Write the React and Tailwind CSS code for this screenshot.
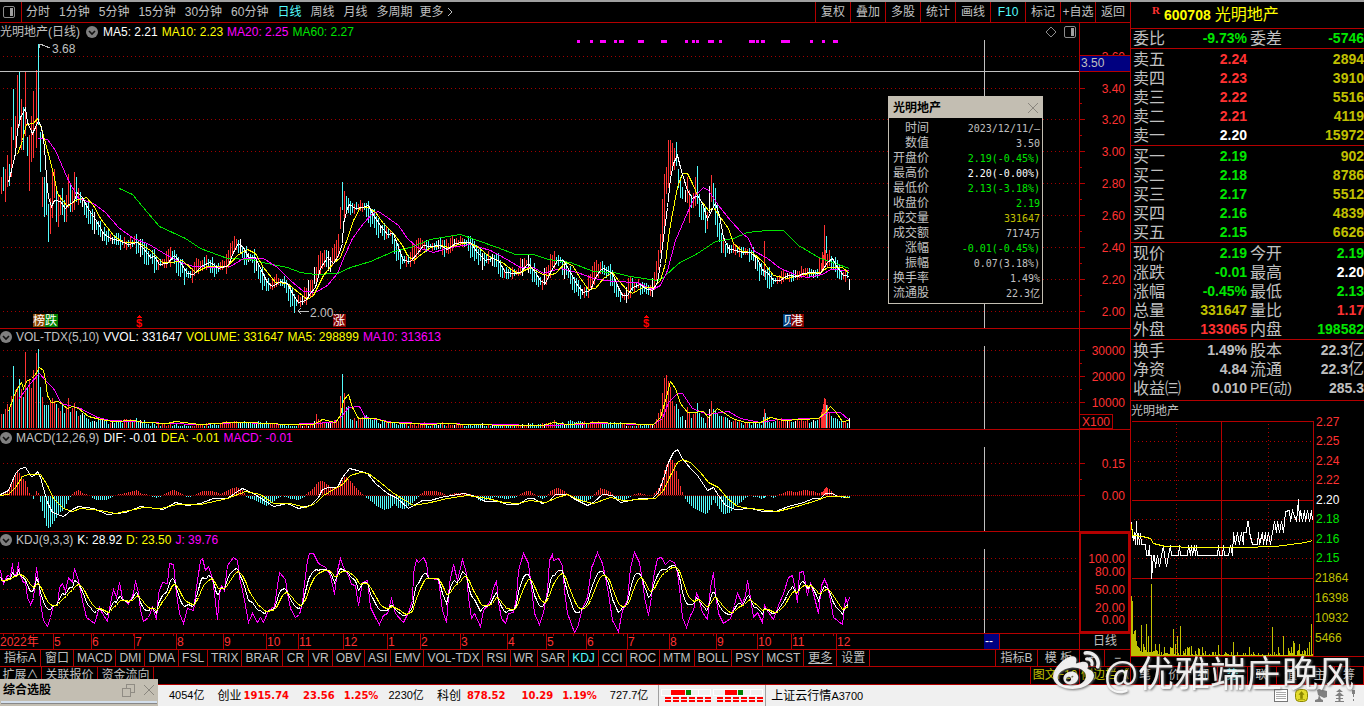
import React from 'react';
import { FaWeibo } from 'react-icons/fa';

const RED = '#ff3232';
const CYAN = '#54fcfc';
const LINE = '#b40000';
const GRAY = '#c0c0c0';
const YELLOW = '#ffff00';
const PINK = '#ff00ff';
const GREEN = '#00e600';
const OLIVE = '#c0c000';

const MA5 = '8,182 11,170 15,153 17,130 20,117 25,108 27,122 32,133 35,127 38,120 41,127 44,147 46,177 48,197 51,206 54,200 60,201 65,208 68,204 73,202 77,192 82,197 87,207 97,222 103,233 110,238 118,240 128,244 137,242 143,248 150,257 154,256 159,264 167,263 174,255 180,262 187,273 193,274 202,265 210,262 218,268 228,265 233,252 238,243 243,247 248,257 255,257 262,272 267,282 272,286 280,281 287,283 293,295 298,302 305,300 310,293 315,287 320,268 327,257 333,263 338,255 342,243 343,223 347,208 349,204 355,208 362,207 368,205 373,215 380,225 387,234 393,233 398,247 403,260 410,261 417,253 423,245 430,246 440,245 447,249 455,243 463,242 470,242 477,252 485,260 492,258 498,260 505,272 513,273 520,272 528,263 535,272 540,280 545,283 550,272 557,260 563,260 570,272 577,285 583,292 590,290 595,277 600,270 603,268 612,273 617,285 622,295 627,295 632,287 640,284 645,288 652,290 657,282 660,263 663,237 667,207 670,178 673,163 677,155 680,167 683,177 687,190 692,198 697,195 702,203 707,219 712,208 715,203 719,215 723,237 728,248 735,250 743,252 750,252 757,258 762,270 767,272 773,280 780,280 787,275 797,276 803,273 810,272 820,273 827,262 832,258 837,267 843,275 849,276';
const MA10 = '17,154 22,140 26,124 33,123 37,118 41,128 47,150 53,173 57,193 62,200 67,206 75,200 86,197 93,205 100,218 113,235 123,242 138,242 150,250 162,262 172,262 182,260 195,272 207,266 227,266 237,255 247,249 255,253 263,267 275,282 287,283 298,292 307,299 313,295 323,275 333,263 340,257 347,238 353,220 360,207 368,207 375,212 383,223 393,233 402,245 407,255 413,260 422,253 430,247 440,245 448,247 458,244 468,242 478,247 490,257 502,262 512,270 518,273 530,267 540,273 547,275 555,273 565,262 572,265 580,278 588,289 595,288 603,278 612,272 618,280 627,290 632,293 642,287 653,287 660,280 665,263 668,237 672,213 677,187 682,173 687,173 692,183 698,197 708,210 713,207 720,217 728,228 733,243 742,251 752,252 763,262 773,275 787,278 797,275 810,273 820,272 827,267 842,267 849,273';
const MA20 = '38,138 47,139 55,150 67,178 78,198 93,203 105,212 118,227 133,238 147,243 167,255 180,262 193,266 213,267 230,266 243,258 263,258 277,267 290,280 303,291 315,292 327,285 337,273 343,258 352,238 363,223 372,213 378,211 387,217 398,225 407,238 417,247 433,252 450,247 470,244 490,250 503,257 520,267 533,267 543,273 560,268 577,272 593,278 613,281 637,282 652,289 660,285 667,270 675,240 687,212 695,195 703,187 708,190 718,205 730,220 742,233 748,238 753,250 767,258 780,268 797,275 807,277 822,274 830,269 849,270';
const MA60 = '119,188 132,194 147,212 159,226 185,238 200,248 227,258 250,259 267,263 287,267 300,272 315,274 337,273 350,267 370,261 393,251 410,247 430,239 460,234 477,240 497,247 515,254 533,254 548,259 570,262 593,271 613,272 630,276 657,280 663,277 678,263 697,253 715,241 733,238 747,232 767,230 783,230 798,245 820,258 835,263 849,268';
const VOL5 = '8,411 13,397 17,388 21,382 23,388 26,381 31,378 35,374 39,367 43,370 45,380 47,395 51,402 58,401 67,408 72,406 78,408 88,416 100,419 113,421 133,420 143,422 167,423 175,421 200,424 230,422 247,422 287,424 313,424 322,419 335,422 340,415 343,400 348,394 352,407 358,418 375,418 388,422 430,424 443,423 470,424 513,425 543,425 553,422 567,424 597,422 617,423 653,424 660,417 665,400 670,381 675,388 680,403 687,412 693,412 703,411 708,417 717,408 723,412 732,418 745,422 760,422 770,417 783,420 818,418 825,412 830,406 835,411 842,421 849,420';
const VOL10 = '18,399 30,383 39,373 45,380 53,388 61,403 80,408 97,417 110,420 133,421 167,423 200,424 240,422 287,424 333,422 342,415 348,407 359,406 365,417 383,420 393,422 430,423 547,425 597,423 653,424 662,418 668,402 677,393 682,393 692,408 707,414 728,411 740,418 760,422 777,419 818,418 828,412 840,412 849,420';
const DIF = '0,494 8,490 15,473 20,468 25,467 31,476 34,475 37,471 40,477 43,488 47,502 52,512 63,516 72,509 78,506 93,508 107,514 125,512 140,506 163,509 175,502 187,505 200,503 213,498 227,498 237,491 242,488 253,493 267,502 273,506 287,503 298,508 310,505 318,497 322,489 328,487 337,487 342,477 349,468 357,470 367,473 375,483 387,493 397,498 408,508 422,500 430,500 440,497 463,493 472,495 485,501 498,501 507,504 518,504 527,498 533,498 542,503 548,501 555,494 567,494 573,498 587,505 593,502 602,494 612,495 620,502 630,500 640,498 652,498 658,492 663,478 668,462 673,452 677,449 682,458 690,468 697,475 707,490 713,487 718,495 725,505 735,509 750,508 763,511 775,511 788,506 803,502 813,498 820,498 825,493 832,493 837,496 849,497';
const DEA = '0,495 8,494 15,487 22,476 28,474 40,474 47,485 53,498 63,508 72,511 80,508 100,510 115,513 143,507 160,508 177,504 200,504 227,498 245,491 260,494 273,503 290,503 305,507 315,503 323,495 333,489 342,484 350,475 360,472 368,473 380,482 392,492 403,499 413,505 430,502 447,498 467,495 487,498 503,502 517,503 530,500 545,502 557,497 567,494 580,500 593,503 610,497 623,500 640,499 655,498 663,490 670,475 677,462 682,459 690,462 700,472 708,482 718,487 727,498 737,506 750,508 777,511 793,507 813,501 827,496 840,496 849,497';
const KDJ_J = '0,570 2,580 3,583 7,575 10,576 12,563 13,573 16,575 18,562 19,573 23,582 25,582 27,597 30,604 33,598 36,567 39,587 40,603 43,620 47,626 50,617 53,605 57,605 59,587 62,583 65,591 68,577 72,582 74,568 78,580 82,600 86,617 94,623 99,607 102,613 107,621 110,603 113,589 116,597 119,582 122,598 128,604 133,593 135,580 138,593 140,610 143,621 148,617 152,607 156,619 158,593 162,582 167,583 169,563 173,564 176,593 179,613 183,623 187,608 193,610 196,587 200,560 202,558 205,570 208,566 212,578 214,593 217,619 219,593 221,585 224,590 227,565 233,557 237,560 239,577 242,590 244,600 248,622 252,613 257,622 260,617 263,622 268,610 274,606 277,585 279,572 285,579 287,593 290,608 295,617 299,614 302,602 304,583 307,560 309,553 313,553 318,563 325,567 330,575 334,594 337,570 340,558 343,567 348,575 351,584 355,585 358,605 362,582 367,580 370,607 375,617 379,624 383,615 387,613 391,598 395,613 403,622 408,612 412,600 413,573 416,559 418,562 423,557 426,563 428,578 438,579 442,610 446,622 449,583 453,564 457,580 462,559 466,573 468,597 471,618 474,613 480,626 483,610 487,605 490,600 493,588 496,580 498,602 501,618 505,623 508,613 513,612 516,597 518,570 523,553 528,563 531,587 534,613 539,624 543,612 547,590 549,560 552,554 553,560 558,558 562,565 564,590 567,613 574,632 577,627 582,608 587,597 591,567 593,563 597,552 602,563 605,577 608,593 612,620 618,631 622,610 627,600 630,567 634,552 639,562 642,580 644,597 648,615 651,597 653,577 657,558 661,557 665,564 669,560 674,562 677,572 680,597 682,617 686,627 690,615 693,610 696,593 698,597 702,612 707,619 710,587 713,572 715,593 718,613 723,623 730,618 734,605 737,593 742,603 745,595 747,580 750,597 753,617 757,612 762,622 764,605 768,612 773,619 778,605 783,593 788,577 792,575 794,585 797,602 799,572 803,571 807,595 810,582 813,593 818,613 821,585 824,579 827,585 830,600 833,617 842,624 845,598 847,602 849,597';

// x, high, low, colour
const KEY_BARS = '1,177,194,r 3,167,191,c 5,169,202,r 7,155,187,r 9,164,186,c 11,127,177,r 13,89,140,c 15,116,150,r 17,75,134,r 19,72,126,c 21,99,150,r 23,107,150,c 25,72,136,r 27,137,156,c 29,135,191,r 31,116,162,r 33,91,158,r 36,70,148,r 38,44,125,c 40,132,172,c 42,177,207,r 44,177,217,c 46,170,215,c 48,204,242,c 50,198,234,r 52,170,218,r 54,169,198,r 56,190,222,c 58,195,227,r 60,195,215,r 62,188,215,c 64,200,222,c 66,195,222,r 68,174,208,r 70,184,212,c 72,190,212,r 74,172,210,r 76,177,202,c 78,188,205,r 340,207,229,r 342,182,210,c 344,191,218,r 346,196,210,c 658,250,270,r 660,234,253,r 662,199,243,r 664,174,230,r 666,167,194,r 668,140,188,r 670,140,175,r 672,143,168,r 674,148,170,r 676,142,166,c 678,169,188,c 680,177,198,c 682,187,199,c 685,190,202,w 687,177,203,r 689,190,223,r 691,195,208,c 693,193,208,r 695,177,206,r 697,166,204,c 699,194,217,c 701,204,220,c 703,205,220,c 705,207,233,c 707,212,229,r 709,186,213,w 711,175,202,r 713,183,207,c 715,188,225,c 717,203,237,c 719,223,242,c 721,233,253,c 723,236,253,r 764,241,277,r 822,252,270,r 824,225,260,r 826,236,253,c 849,279,290,w';
const VOL_TOPS = '1,414 3,414 5,409 7,404 9,408 11,396 13,366 15,390 17,387 19,379 21,389 23,397 25,352 27,387 29,379 31,388 33,370 36,353 38,349 40,387 42,397 44,405 48,405 52,398 56,404 60,411 62,404 64,413 66,408 68,398 70,412 74,403 76,411 78,416 82,414 90,420 100,418 110,423 120,420 136,418 150,423 190,425 230,421 260,421 290,425 312,424 316,415 322,421 338,420 340,394 342,374 344,392 346,406 348,406 350,417 358,419 366,414 380,421 400,423 540,424 550,421 600,421 640,425 655,422 658,411 660,407 662,393 664,376 666,374 668,380 670,387 672,402 676,404 680,414 685,419 687,407 689,412 691,417 695,411 697,402 699,413 705,420 709,408 711,402 713,406 717,414 725,415 730,420 740,422 762,423 764,410 766,415 770,421 780,419 810,420 818,418 822,410 824,397 826,403 830,413 836,420 845,422 849,419';
const MACD_BARS = '1,0 8,4 13,15 17,25 20,20 25,14 29,2 33,-3 37,6 40,-6 42,-15 46,-30 49,-33 53,-27 58,-18 63,-14 68,-4 71,0 75,4 78,5 84,1 90,0 95,-4 105,-4 112,-1 120,1 130,3 136,5 142,1 150,0 156,-2 165,1 173,6 180,2 186,-1 195,0 202,4 212,4 220,1 228,5 236,8 242,5 247,-2 257,-5 266,-10 275,-4 282,0 290,-3 298,-4 305,0 312,6 318,13 322,14 330,8 337,7 341,14 345,19 350,14 356,7 362,1 368,-3 376,-10 384,-14 390,-12 394,-8 398,-12 405,-13 413,-6 418,-1 424,4 432,4 440,3 446,0 455,2 465,2 472,0 480,-5 490,-3 495,-1 505,-3 514,-2 520,1 526,4 530,4 535,0 541,-3 546,-1 551,5 557,7 562,5 570,-1 577,-6 583,-7 590,-3 594,1 600,7 606,5 611,2 616,-3 622,-5 630,-1 635,1 640,2 647,0 652,0 657,5 661,13 664,25 667,32 671,36 674,32 677,20 680,9 683,0 688,-7 694,-13 700,-16 706,-19 709,-14 713,-4 716,-8 722,-18 729,-17 735,-10 742,-5 748,0 756,-1 762,-3 768,0 774,-2 780,1 788,4 795,3 804,5 813,4 818,1 822,3 826,8 830,5 835,0 842,-2 849,-2';
const TREND = '1131,522 1132,535 1133,540 1134,532 1135,544 1136,521 1137,544 1138,533 1139,544 1140,533 1141,544 1145,544 1146,555 1148,555 1149,545 1149,555 1151,555 1151,578 1152,567 1153,555 1154,555 1155,567 1157,555 1159,566 1161,555 1163,545 1164,555 1166,566 1168,555 1170,545 1171,555 1178,555 1179,545 1180,555 1187,555 1188,545 1190,555 1191,545 1192,555 1194,545 1195,555 1196,545 1197,555 1217,555 1218,545 1219,555 1222,555 1223,545 1224,555 1228,555 1230,545 1232,555 1233,532 1235,544 1237,532 1239,544 1241,532 1243,544 1243,532 1246,532 1247,521 1248,521 1249,532 1252,544 1257,544 1258,532 1259,544 1262,532 1263,544 1265,532 1266,544 1268,532 1270,544 1272,532 1274,521 1276,532 1277,521 1279,532 1281,521 1283,532 1285,511 1289,510 1290,521 1292,510 1296,521 1297,510 1298,499 1299,521 1300,510 1302,521 1304,510 1305,521 1307,510 1309,521 1311,510 1312,520';
const TREND_AVG = '1131,524 1132,535 1142,536 1150,538 1153,543 1165,546 1195,547 1240,547 1275,546 1290,544 1305,542 1312,540';
const TREND_SPIKES = { 1131: 60, 1132: 55, 1133: 22, 1134: 25, 1135: 26, 1136: 15, 1137: 10, 1141: 31, 1146: 32, 1148: 20, 1151: 72, 1159: 12, 1173: 27, 1175: 12, 1177: 20, 1180: 30, 1189: 9, 1191: 10, 1218: 11, 1233: 14, 1249: 9, 1272: 29, 1278: 9, 1283: 20, 1293: 15, 1294: 13, 1299: 12, 1309: 14, 1311: 32 };

const parse = (text) => text.split(' ').map((p) => p.split(',').map(Number));
const noise = (n) => {
  const v = Math.sin(n * 12.9898) * 43758.5453;
  return v - Math.floor(v);
};
const at = (points, x) => {
  const i = points.findIndex((p) => p[0] >= x);
  if (i === -1) return points[points.length - 1][1];
  if (i === 0) return points[0][1];
  const [x0, y0] = points[i - 1];
  const [x1, y1] = points[i];
  return y0 + ((y1 - y0) * (x - x0)) / (x1 - x0);
};

const BAR_COLORS = { r: RED, c: CYAN, w: '#ffffff' };

const buildBars = () => {
  const bars = KEY_BARS.split(' ').map((b) => {
    const [x, hi, lo, c] = b.split(',');
    return { x: Number(x), hi: Number(hi), lo: Number(lo), color: BAR_COLORS[c] };
  });
  const ma = parse(MA5);
  const fill = (from, to) => {
    for (let x = from; x <= to; x += 2) {
      if (bars.some((b) => b.x === x)) continue;
      const mid = at(ma, x + 3);
      const slope = mid - at(ma, x + 1);
      const size = 4 + Math.min(Math.abs(slope) * 2, 5);
      const color = noise(x + 7) > 0.92 ? '#ffffff' : slope + (noise(x) - 0.5) * 3 < 0 ? RED : CYAN;
      bars.push({
        x,
        hi: Math.round(mid - size * (0.4 + noise(x + 1))),
        lo: Math.round(mid + size * (0.4 + noise(x + 2))),
        color,
      });
    }
  };
  fill(80, 338);
  fill(348, 656);
  fill(725, 847);
  return bars.sort((a, b) => a.x - b.x);
};

const BARS = buildBars();

// D and K follow from J: J = 3K - 2D, D = 2/3 D' + 1/3 K
const buildKdj = () => {
  const j = parse(KDJ_J);
  let d = 582;
  const k = [];
  const dd = [];
  for (let x = 0; x <= 849; x += 2) {
    const v = at(j, x);
    d = (6 * d + v) / 7;
    dd.push(`${x},${Math.round(d)}`);
    k.push(`${x},${Math.round((v + 2 * d) / 3)}`);
  }
  return { k: k.join(' '), d: dd.join(' ') };
};

const KDJ = buildKdj();

const Curve = ({ points, color }) => (
  <polyline points={points} fill="none" stroke={color} strokeWidth="1" transform="translate(.5 .5)" />
);

const Grid = ({ rows, dash = '1 3' }) =>
  rows.map((y) => (
    <line key={y} x1="3" x2="100%" y1={y} y2={y} stroke="#a00000" strokeDasharray={dash} transform="translate(0 .5)" />
  ));

const Axis = ({ top, left = 1080, labels, ticks = [], children }) => (
  <svg className="h-full w-[50px] text-xs" shapeRendering="crispEdges">
    <g transform={`translate(${-left} ${-top})`}>
      {ticks.map((y, i) => (
        <rect key={y} x="1080" y={y} width={i % 2 ? 2 : 5} height="1" fill={LINE} />
      ))}
      {labels.map(([text, y]) => (
        <text key={text} x="1125" y={y + 5} textAnchor="end" fill={RED}>{text}</text>
      ))}
      {children}
    </g>
  </svg>
);

const Fold = () => (
  <button type="button" aria-label="指标菜单" className="shrink-0">
    <svg width="12" height="12" viewBox="0 0 12 12">
      <circle cx="6" cy="6" r="6" fill="#808080" />
      <path d="M3 5l3 3 3-3" fill="none" stroke="#111" strokeWidth="1.6" />
    </svg>
  </button>
);

const PanelIcon = () => (
  <svg width="12" height="12" viewBox="0 0 12 12">
    <rect x=".5" y=".5" width="11" height="11" rx="1.5" fill="none" stroke="#8c8c8c" />
    <rect x="7" y="2" width="3" height="8" fill="#a0a0a0" />
  </svg>
);

const Panel = ({ top, className, headClass = 'pb-[2px]', axisClass = 'border-l', head, axis, overlay, children }) => (
  <section className={`relative flex border-b border-[#b40000] ${className}`}>
    <div className="flex min-w-0 flex-1 flex-col">
      <header className={`flex h-[17px] shrink-0 items-center gap-1 leading-4 whitespace-nowrap ${headClass}`}>{head}</header>
      <svg className="min-h-0 w-full flex-1 text-xs" shapeRendering="crispEdges">
        <g transform={`translate(0 ${-(top + 17)})`}>
          {children}
          <rect x="984" y={top + 17} width="1" height="300" fill={GRAY} />
        </g>
      </svg>
    </div>
    <div className={`w-[51px] shrink-0 overflow-hidden border-[#b40000] ${axisClass}`}>{axis}</div>
    {overlay}
  </section>
);

const PERIODS = ['分时', '1分钟', '5分钟', '15分钟', '30分钟', '60分钟', '日线', '周线', '月线', '多周期'];
const TOOLS = ['复权', '叠加', '多股', '统计', '画线', 'F10', '标记', '+自选', '返回'];

const Toolbar = () => (
  <nav className="flex h-[21px] items-stretch border-b border-[#b40000]">
    <button type="button" aria-label="侧栏" className="flex w-[21px] items-center pl-[3px]">
      <PanelIcon />
    </button>
    <div className="flex flex-1 items-center gap-[9px] border-l border-[#b40000] pl-1 whitespace-nowrap">
      {PERIODS.map((p) => (
        <button key={p} type="button" className={p === '日线' ? 'text-[#54fcfc]' : ''}>{p}</button>
      ))}
      <button type="button" className="-ml-[2px] flex items-center gap-[3px]">
        更多
        <svg width="6" height="10" viewBox="0 0 6 10"><path d="M1 1l4 4-4 4" fill="none" stroke={GRAY} /></svg>
      </button>
    </div>
    {TOOLS.map((tool) => (
      <button
        key={tool}
        type="button"
        className={`w-[35px] border-l border-[#b40000] text-center whitespace-nowrap ${tool === 'F10' ? 'text-[#54fcfc]' : ''}`}
      >
        {tool}
      </button>
    ))}
  </nav>
);

const DETAILS = [
  ['时间', '2023/12/11/—', ''],
  ['数值', '3.50', ''],
  ['开盘价', '2.19(-0.45%)', 'text-[#00e600]'],
  ['最高价', '2.20(-0.00%)', 'text-white'],
  ['最低价', '2.13(-3.18%)', 'text-[#00e600]'],
  ['收盘价', '2.19', 'text-[#00e600]'],
  ['成交量', '331647', 'text-[#c0c000]'],
  ['成交额', '7174万', ''],
  ['涨幅', '-0.01(-0.45%)', 'text-[#00e600]'],
  ['振幅', '0.07(3.18%)', ''],
  ['换手率', '1.49%', ''],
  ['流通股', '22.3亿', ''],
];

const DetailWindow = () => (
  <div className="absolute top-[73px] left-[888px] w-[155px] border border-[#c3beb2] bg-black">
    <div className="flex h-[21px] items-center justify-between bg-[#c3beb2] pr-[3px] pl-1 font-bold text-black">
      光明地产
      <button type="button" aria-label="关闭">
        <svg width="12" height="12" viewBox="0 0 12 12"><path d="M1 1l10 10M11 1L1 11" stroke="#8a867e" /></svg>
      </button>
    </div>
    <div className="pt-[3px] pb-[2px]">
      <table className="w-full table-fixed border-collapse">
        <tbody>
          {DETAILS.map(([name, value, color]) => (
            <tr key={name} className="h-[15px] leading-[15px]">
              <th className="w-10 p-0 text-right font-normal whitespace-nowrap">{name}</th>
              <td className={`p-0 pr-[2px] text-right font-['DejaVu_Sans_Mono','Noto_Sans_CJK_SC',monospace] text-[10px] whitespace-nowrap ${color}`}>
                {value}
              </td>
            </tr>
          ))}
        </tbody>
      </table>
    </div>
  </div>
);

const Tag = ({ x, text, bg, width = 13 }) => (
  <g>
    <rect x={x} y="314" width={width} height="13" fill={bg} />
    <text x={x} y="325" fill="#fff">{text}</text>
  </g>
);

const Dollar = ({ x }) => (
  <g fill="#ff0000">
    <path d={`M${x - 3} 318l3-3 3 3z`} />
    <text x={x} y="327" textAnchor="middle" className="text-[11px] font-bold">$</text>
  </g>
);

const PINK_DASHES = [[577, 3], [590, 3], [600, 6], [614, 3], [619, 5], [638, 6], [661, 6], [685, 3], [692, 3], [696, 3], [708, 6], [719, 3], [749, 6], [756, 3], [761, 4], [781, 9], [810, 3], [822, 3], [833, 5]];

const PricePanel = () => (
  <Panel
    top={23}
    className="h-[306px]"
    headClass=""
    overlay={<DetailWindow />}
    head={
      <>
        <span className="mr-[2px]">光明地产(日线)</span>
        <Fold />
        <span className="ml-px text-white">MA5: 2.21</span>
        <span className="text-[#ffff00]">MA10: 2.23</span>
        <span className="text-[#ff00ff]">MA20: 2.25</span>
        <span className="text-[#00e600]">MA60: 2.27</span>
        <span className="ml-auto flex items-center gap-[7px] pr-[3px]">
          <svg width="12" height="12" viewBox="0 0 12 12"><path d="M6 1l5 5-5 5-5-5z" fill="none" stroke="#8c8c8c" /></svg>
          <PanelIcon />
        </span>
      </>
    }
    axis={
      <Axis
        top={23}
        ticks={Array.from({ length: 15 }, (_, i) => (i === 0 ? 88 : 87 + i * 16))}
        labels={[['3.60', 56], ['3.40', 88], ['3.20', 119], ['3.00', 151], ['2.80', 183], ['2.60', 215], ['2.40', 247], ['2.20', 279], ['2.00', 311]]}
      >
        <rect x="1079.5" y="55.5" width="51" height="16" fill="#000080" stroke={LINE} />
        <text x="1081" y="67" fill={GRAY}>3.50</text>
      </Axis>
    }
  >
    <Grid rows={[56, 88, 119, 151, 183, 215, 247, 279, 311]} />
    {PINK_DASHES.map(([x, w]) => <rect key={x} x={x} y="40" width={w} height="3" fill={PINK} />)}
    {BARS.map((b) => <rect key={b.x} x={b.x} y={b.hi} width="1" height={b.lo - b.hi} fill={b.color} />)}
    <Curve points={MA60} color={GREEN} />
    <Curve points={MA20} color={PINK} />
    <Curve points={MA10} color={YELLOW} />
    <Curve points={MA5} color="#fff" />
    <rect x="0" y="71" width="100%" height="1" fill={GRAY} />
    <path d="M39 44h3M39 44v4M40 44l10 4M298 311h11M298 311l3-3M298 311l3 3" stroke={GRAY} fill="none" />
    <text x="52" y="53" fill={GRAY}>3.68</text>
    <text x="310" y="317" fill={GRAY}>2.00</text>
    <Tag x={33} text="榜" bg="#8a4600" />
    <Tag x={45} text="跌" bg="#008200" />
    <Tag x={333} text="涨" bg="#820000" />
    <Tag x={783} text="贝" bg="#003c78" />
    <Tag x={791} text="港" bg="#820000" />
    <Dollar x={139} />
    <Dollar x={646} />
  </Panel>
);

const VOL_POINTS = parse(VOL_TOPS);
const MACD_POINTS = parse(MACD_BARS);

const VolumePanel = () => (
  <Panel
    top={329}
    className="h-[101px]"
    head={
      <>
        <Fold />
        <span>VOL-TDX(5,10)</span>
        <span className="text-white">VVOL: 331647</span>
        <span className="text-[#ffff00]">VOLUME: 331647</span>
        <span className="text-[#ffff00]">MA5: 298899</span>
        <span className="text-[#ff00ff]">MA10: 313613</span>
      </>
    }
    axis={
      <Axis top={329} ticks={[350, 363, 376, 389, 402]} labels={[['30000', 350], ['20000', 376], ['10000', 402]]}>
        <rect x="1079.5" y="414.5" width="33" height="14" fill="none" stroke={LINE} />
        <text x="1082" y="426" fill={RED}>X100</text>
      </Axis>
    }
  >
    <Grid rows={[350, 376, 402]} />
    {BARS.map((b) => {
      const y = Math.min(Math.round(at(VOL_POINTS, b.x) + (b.x > 80 ? noise(b.x) * 4 - 1 : 0)), 426);
      return <rect key={b.x} x={b.x} y={y} width="1" height={428 - y} fill={b.color} />;
    })}
    <Curve points={VOL10} color={PINK} />
    <Curve points={VOL5} color={YELLOW} />
  </Panel>
);

const MacdPanel = () => (
  <Panel
    top={430}
    className="h-[102px]"
    head={
      <>
        <Fold />
        <span>MACD(12,26,9)</span>
        <span className="text-white">DIF: -0.01</span>
        <span className="text-[#ffff00]">DEA: -0.01</span>
        <span className="text-[#ff00ff]">MACD: -0.01</span>
      </>
    }
    axis={<Axis top={430} ticks={[463, 479, 495]} labels={[['0.15', 463], ['0.00', 495]]} />}
  >
    <Grid rows={[463]} />
    <Grid rows={[495]} dash="1 1" />
    {BARS.map((b) => {
      const h = Math.round(at(MACD_POINTS, b.x));
      return <rect key={b.x} x={b.x} y={h > 0 ? 495 - h : 496} width="1" height={Math.abs(h)} fill={h > 0 ? RED : CYAN} />;
    })}
    <Curve points={DIF} color="#fff" />
    <Curve points={DEA} color={YELLOW} />
  </Panel>
);

const KdjPanel = () => (
  <Panel
    top={532}
    className="h-[102px]"
    axisClass="border-2"
    head={
      <>
        <Fold />
        <span>KDJ(9,3,3)</span>
        <span className="text-white">K: 28.92</span>
        <span className="text-[#ffff00]">D: 23.50</span>
        <span className="text-[#ff00ff]">J: 39.76</span>
      </>
    }
    axis={
      <Axis top={534} left={1081} labels={[['100.00', 558], ['80.00', 571], ['50.00', 589], ['20.00', 607], ['0.00', 619]]} />
    }
  >
    <Grid rows={[558, 571, 589, 607, 619]} />
    <Curve points={KDJ_J} color={PINK} />
    <Curve points={KDJ.k} color="#fff" />
    <Curve points={KDJ.d} color={YELLOW} />
  </Panel>
);

const MONTHS = [[53, '5'], [91, '6'], [134, '7'], [176, '8'], [223, '9'], [266, '10'], [298, '11'], [343, '12'], [387, '1'], [420, '2'], [460, '3'], [507, '4'], [546, '5'], [586, '6'], [627, '7'], [669, '8'], [716, '9'], [757, '10'], [791, '11'], [836, '12']];

const DateAxis = () => (
  <div className="flex h-4 border-b border-[#b40000]">
    <svg className="h-[15px] min-w-0 flex-1 text-xs" shapeRendering="crispEdges">
      {Array.from({ length: 84 }, (_, i) => <rect key={i} x={3 + i * 10} y="0" width="1" height="2" fill={LINE} />)}
      <text x="0" y="12" fill={RED}>2022年</text>
      {MONTHS.map(([x, m]) => (
        <g key={x}>
          <rect x={x} y="0" width="1" height="15" fill={LINE} />
          <text x={x + 1} y="12" fill={RED}>{m}</text>
        </g>
      ))}
      <rect x="984" y="0" width="15" height="15" fill="#000080" />
      <rect x="999" y="0" width="1" height="15" fill={LINE} />
      <text x="985" y="11" fill="#fff">--</text>
    </svg>
    <button type="button" className="w-[51px] border-l border-[#b40000] text-center leading-[15px]">日线</button>
  </div>
);

const INDICATORS = ['指标A', '窗口', 'MACD', 'DMI', 'DMA', 'FSL', 'TRIX', 'BRAR', 'CR', 'VR', 'OBV', 'ASI', 'EMV', 'VOL-TDX', 'RSI', 'WR', 'SAR', 'KDJ', 'CCI', 'ROC', 'MTM', 'BOLL', 'PSY', 'MCST', '更多', '设置'];
const WIDE_TABS = ['指标A', '窗口', 'CR', '更多', '设置'];

const IndicatorTabs = () => (
  <nav className="flex h-[17px] border-b border-[#b40000] leading-4 whitespace-nowrap">
    {INDICATORS.map((name) => (
      <button
        key={name}
        type="button"
        className={`border-r border-[#b40000] ${WIDE_TABS.includes(name) ? 'px-1' : 'px-[3px]'} ${name === 'KDJ' ? 'text-[#54fcfc]' : ''} ${name === '更多' ? 'underline' : ''}`}
      >
        {name}
      </button>
    ))}
    <button type="button" className="ml-auto w-[42px] border-l border-[#b40000]">指标B</button>
    <button type="button" className="w-[42px] border-l border-[#b40000]">模 板</button>
    <button type="button" className="w-[25px] border-l border-[#b40000]">+</button>
    <button type="button" className="w-[26px] border-l border-[#b40000]">−</button>
  </nav>
);

const ExtraTabs = () => (
  <nav className="flex h-[18px] border-b border-[#b40000] leading-[17px] whitespace-nowrap">
    <button type="button" className="w-[42px] border-r border-[#b40000]">扩展∧</button>
    <button type="button" className="w-14 border-r border-[#b40000]">关联报价</button>
    <button type="button" className="w-14 border-r border-[#b40000]">资金流向</button>
    <button type="button" className="ml-auto w-[49px] border-l border-[#b40000] text-[#c0c000]">图文F10</button>
    <button type="button" className="w-[51px] border-l border-[#b40000] text-[#c0c000]">侧边栏《</button>
  </nav>
);

const G = 'text-[#00e600]';
const R = 'text-[#ff3232]';
const Y = 'text-[#c0c000]';
const W = 'text-white';

const QUOTE_SECTIONS = [
  { pad: '', rows: [['委比', '-9.73%', G, '委差', '-5746', G]] },
  {
    pad: 'pt-px',
    rows: [
      ['卖五', '2.24', R, '', '2894', Y],
      ['卖四', '2.23', R, '', '3910', Y],
      ['卖三', '2.22', R, '', '5516', Y],
      ['卖二', '2.21', R, '', '4119', Y],
      ['卖一', '2.20', W, '', '15972', Y],
    ],
  },
  {
    pad: 'pt-px',
    rows: [
      ['买一', '2.19', G, '', '902', Y],
      ['买二', '2.18', G, '', '8786', Y],
      ['买三', '2.17', G, '', '5512', Y],
      ['买四', '2.16', G, '', '4839', Y],
      ['买五', '2.15', G, '', '6626', Y],
    ],
  },
  {
    pad: 'pt-px',
    rows: [
      ['现价', '2.19', G, '今开', '2.19', G],
      ['涨跌', '-0.01', G, '最高', '2.20', W],
      ['涨幅', '-0.45%', G, '最低', '2.13', G],
      ['总量', '331647', Y, '量比', '1.17', R],
      ['外盘', '133065', R, '内盘', '198582', G],
    ],
  },
  {
    pad: 'pt-px pb-[2px]',
    rows: [
      ['换手', '1.49%', '', '股本', '22.3亿', ''],
      ['净资', '4.84', '', '流通', '22.3亿', ''],
      ['收益㈢', '0.010', '', 'PE(动)', '285.3', ''],
    ],
  },
];

const Value = ({ text }) =>
  text.endsWith('亿') ? <>{text.slice(0, -1)}<span className="text-base leading-none font-normal">亿</span></> : text;

const Quote = ({ pad, rows }) => (
  <div className={`border-t border-[#b40000] ${pad}`}>
    <table className="w-full table-fixed border-collapse">
      <tbody>
        {rows.map(([a, av, ac, b, bv, bc]) => (
          <tr key={a} className="h-[19px] leading-[19px] whitespace-nowrap">
            <th className="w-[51px] p-0 pl-[2px] text-left text-base leading-[19px] font-normal">{a}</th>
            <td className={`w-[65px] p-0 text-right text-sm leading-[19px] font-bold ${ac}`}>{av}</td>
            <th className={`w-[49px] p-0 pl-[3px] text-left font-normal ${b === 'PE(动)' ? 'text-sm leading-[19px]' : 'text-base leading-[19px]'}`}>{b}</th>
            <td className={`p-0 text-right text-sm leading-[19px] font-bold ${bc}`}><Value text={bv} /></td>
          </tr>
        ))}
      </tbody>
    </table>
  </div>
);

const TREND_LABELS = [
  ['2.27', 422, RED], ['2.25', 441, RED], ['2.24', 461, RED], ['2.22', 480, RED], ['2.20', 500, '#fff'],
  ['2.18', 519, GREEN], ['2.16', 539, GREEN], ['2.15', 558, GREEN],
  ['21864', 578, OLIVE], ['16398', 598, OLIVE], ['10932', 618, OLIVE], ['5466', 638, OLIVE],
];

const TrendChart = () => (
  <div className="h-[256px] border-t border-[#b40000]">
    <svg className="h-full w-full text-xs" shapeRendering="crispEdges">
      <g transform="translate(-1131 -401)">
        <text x="1131" y="415" fill={GRAY}>光明地产</text>
        <g stroke={LINE} transform="translate(.5 .5)">
          <path d="M1131 421h182v235M1131 500h182M1131 578h182M1221 421v235" fill="none" />
          {[441, 461, 480, 519, 539, 558, 596, 616, 636].map((y) => (
            <line key={y} x1="1133" x2="1313" y1={y} y2={y} strokeDasharray="1 3" />
          ))}
          <path d="M1176 423v233M1268 423v233" strokeDasharray="1 3" />
        </g>
        {Array.from({ length: 182 }, (_, i) => {
          const x = 1131 + i;
          const edge = i < 75 || i > 155 ? 9 : 4;
          const h = TREND_SPIKES[x] || Math.ceil(noise(x) ** 2 * edge) + (i < 25 ? 3 : 0);
          return <rect key={x} x={x} y={656 - h} width="1" height={h} fill={OLIVE} />;
        })}
        <Curve points={TREND} color="#fff" />
        <Curve points={TREND_AVG} color={YELLOW} />
        {TREND_LABELS.map(([text, y, color]) => (
          <text key={text} x={color === OLIVE ? 1315 : 1316} y={y + 4} fill={color}>{text}</text>
        ))}
      </g>
    </svg>
  </div>
);

const QuotePanel = () => (
  <aside className="w-[234px] shrink-0 border-l border-[#b40000]">
    <h1 className="flex h-[26px] items-center pl-[21px] text-[#ffff00]">
      <span className="w-3 self-start pt-px font-['Liberation_Serif',serif] text-[11px] font-bold text-[#ff3232]">R</span>
      <span className="mr-1 text-sm font-bold">600708</span>
      <span className="text-base">光明地产</span>
    </h1>
    {QUOTE_SECTIONS.map((s) => <Quote key={s.rows[0][0]} {...s} />)}
    <TrendChart />
    <div className="h-[10px] border-t border-[#b40000]" />
    <nav className="flex h-[19px] border-y border-[#b40000] leading-[17px]">
      {['笔', '价', '细', '势', '联', '值', '主', '筹'].map((t) => (
        <button key={t} type="button" className={`flex-1 border-r border-[#b40000] ${t === '势' ? 'text-[#54fcfc]' : ''}`}>{t}</button>
      ))}
    </nav>
  </aside>
);

const Meter = ({ red, green }) => (
  <svg width="50" height="14" viewBox="0 0 50 14" shapeRendering="crispEdges">
    <rect x="0" y="0" width="50" height="7" fill="#fff" />
    <rect x="1" y="1" width="48" height="5" fill="#f0f0f0" />
    <rect x={red} y="1" width={green - red - 1} height="5" fill="#ff0000" />
    <rect x={green} y="1" width="5" height="5" fill="#008200" />
    <rect x="37" y="1" width="1" height="5" fill="#fff" />
    <path d="M4 9h46M4 12h46" stroke="#ff0000" strokeWidth="2" strokeDasharray="6 2" />
  </svg>
);

const num = "font-['DejaVu_Sans',sans-serif] text-[10px] font-bold text-[#ff0000]";

const StatusBar = () => (
  <footer className="flex h-[21px] items-center bg-[#f0f0f0] pl-[169px] whitespace-nowrap text-black">
    <span className="text-[11px]">4054亿</span>
    <span className="ml-[13px]">创业</span>
    <span className={`ml-[2px] ${num}`}>1915.74</span>
    <span className={`ml-[14px] ${num}`}>23.56</span>
    <span className={`ml-[9px] ${num}`}>1.25%</span>
    <span className="ml-[10px] text-[11px]">2230亿</span>
    <span className="ml-[13px]">科创</span>
    <span className={`ml-[6px] ${num}`}>878.52</span>
    <span className={`ml-4 ${num}`}>10.29</span>
    <span className={`ml-[9px] ${num}`}>1.19%</span>
    <span className="ml-[13px] text-[11px]">727.7亿</span>
    <span className="ml-[10px] flex h-full items-center gap-[2px] border-x border-[#a0a0a0] px-[2px]">
      <Meter red={10} green={25} />
      <Meter red={12} green={25} />
    </span>
    <span className="ml-[5px]">上证云行情<span className="text-[11px]">A3700</span></span>
    <span className="ml-auto flex items-center gap-[7px] pr-2">
      <svg width="14" height="13" viewBox="0 0 14 13">
        <rect x=".5" y=".5" width="13" height="12" fill="#fff" stroke="#777" />
        <path d="M2 3.500h10M2 5.500h10M2 7.500h10M2 9.500h10" stroke="#aaa" />
      </svg>
      <svg width="13" height="13" viewBox="0 0 13 13">
        <rect x=".5" y=".5" width="12" height="12" rx="4" fill="#e4dc2c" stroke="#8c8800" />
        <path d="M6.500 2.500l2.500 3H7.500v4h-2v-4H4zM3 10.500h7" fill="#8c8800" stroke="#8c8800" strokeWidth=".6" />
      </svg>
      <svg width="13" height="13" viewBox="0 0 13 13" fill="#808080">
        <path d="M2 1l2-1 8 2v6l-3 1-6-3zM4 6l2 4 2 1v2H0v-2l3-1z" />
      </svg>
      <svg width="9" height="13" viewBox="0 0 9 13" fill="#808080">
        <path d="M4.500 0L8 3H1zM4.500 3L9 7H0zM3.500 7h2v2h-2zM1 9h7v1H1zM3.500 10h2v2h-2zM0 12h9v1H0z" />
      </svg>
      <svg width="5" height="13" viewBox="0 0 5 13" fill="#808080">
        <path d="M1 1h3v4H3v3H2V5H1zM2 10h1v2H2z" />
      </svg>
    </span>
  </footer>
);

const PickerWindow = () => (
  <div className="absolute bottom-0 left-0 h-[27px] w-[158px] bg-[#c3beb2]">
    <div className="flex h-[22px] items-center pr-[3px] pl-[3px] font-bold text-black">
      <span className="flex-1">综合选股</span>
      <button type="button" aria-label="还原" className="mr-2">
        <svg width="13" height="13" viewBox="0 0 13 13" fill="#c3beb2" stroke="#908c84">
          <rect x="4.500" y=".5" width="8" height="8" />
          <rect x=".5" y="4.500" width="8" height="8" />
        </svg>
      </button>
      <button type="button" aria-label="关闭">
        <svg width="12" height="12" viewBox="0 0 12 12"><path d="M1 1l10 10M11 1L1 11" stroke="#8a867e" /></svg>
      </button>
    </div>
    <div className="mx-px h-[3px] border-b border-[#888] bg-[#d4dfec]" />
  </div>
);

const Watermark = () => (
  <div className="pointer-events-none absolute right-[10px] bottom-3 flex h-[46px] items-center text-white/90 drop-shadow-[1px_1px_1px_#666]">
    <FaWeibo size={47} />
    <span className="ml-1 text-4xl leading-[46px] font-['Noto_Sans_CJK_SC',sans-serif] whitespace-nowrap">@优雅端庄晚风</span>
  </div>
);

const App = () => (
  <div className="relative flex min-h-screen flex-col overflow-hidden bg-black font-['Liberation_Sans','Noto_Sans_CJK_SC',sans-serif] text-xs text-[#c0c0c0]">
    <div className="h-[2px] bg-[#a0a0a0]" />
    <div className="flex flex-1">
      <main className="min-w-0 flex-1">
        <Toolbar />
        <PricePanel />
        <VolumePanel />
        <MacdPanel />
        <KdjPanel />
        <DateAxis />
        <IndicatorTabs />
        <ExtraTabs />
      </main>
      <QuotePanel />
    </div>
    <StatusBar />
    <PickerWindow />
    <Watermark />
  </div>
);

export default App;
